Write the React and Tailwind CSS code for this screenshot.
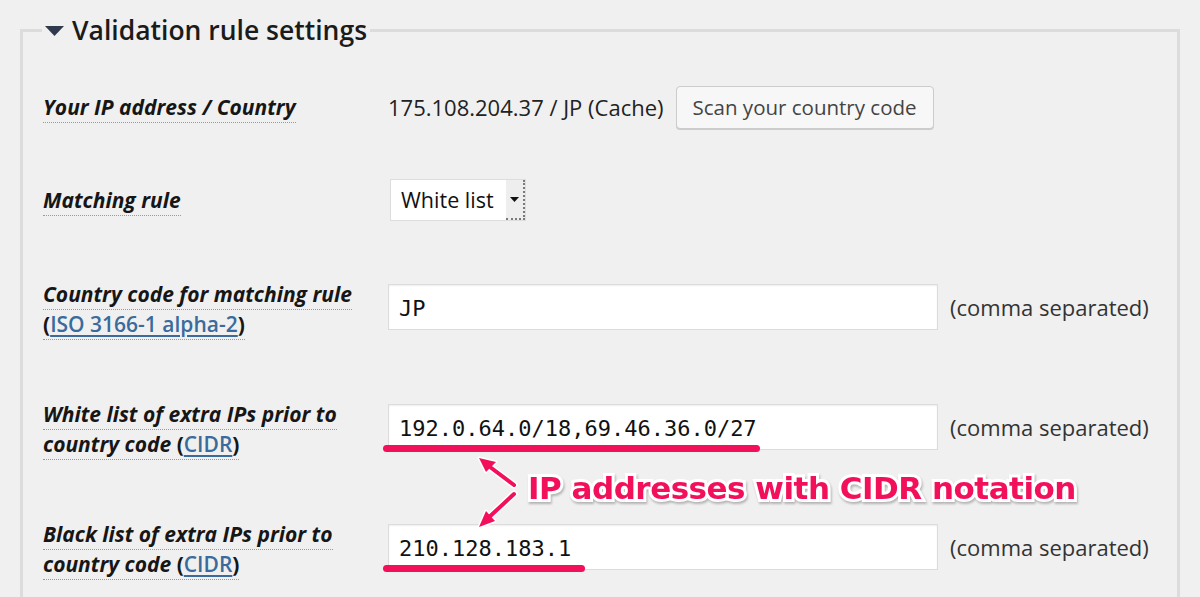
import React from 'react';

const label = 'border-b border-dotted border-[#9a9a9a] pb-[1px]';

function Label({ children }) {
  return (
    <div className="w-[345px] shrink-0 pr-[10px] text-[21px] leading-[30px] font-bold italic text-[#161616]">
      <span className={label} style={{ boxDecorationBreak: 'clone' }}>{children}</span>
    </div>
  );
}

function Link({ children }) {
  return <span className="text-[#3a6b9c] not-italic font-semibold underline underline-offset-[3px] decoration-[#3a6b9c]">{children}</span>;
}

function TextInput({ value, mark }) {
  return (
    <div className="relative w-[550px] h-[46px] bg-white border border-[#dcdcdc] shadow-[inset_0_1px_2px_rgba(0,0,0,0.07)] flex items-center pl-[10px] pt-[3px] font-['DejaVu_Sans_Mono',monospace] text-[22px] text-[#111]">
      {value}
      {mark && (
        <div className={`absolute left-[-6px] top-[40px] h-[7px] rounded-full bg-[#f2105a] ${mark}`} />
      )}
    </div>
  );
}

function Note() {
  return <span className="ml-[12px] text-[22px] text-[#333]">(comma separated)</span>;
}

export default function App() {
  return (
    <div className="relative h-[597px] overflow-hidden bg-[#f0f0f0] font-['Open_Sans',sans-serif] text-[#222]">
      <fieldset className="mx-[20px] mt-[14px] h-[700px] border-[3px] border-[#dcdcdc] px-[19px]">
        <legend className="px-[3px] flex items-center gap-[8px] text-[26.5px] leading-[32px] font-semibold text-[#1b1b1b]">
          <svg width="19" height="10" viewBox="0 0 19 10" className="mt-[2px]">
            <path d="M0 0 H19 L9.5 10 Z" fill="#2f3b4c" />
          </svg>
          Validation rule settings
        </legend>

        <div className="pl-[1px] pt-[38px]">
          <div className="flex items-center h-[46px]">
            <Label>Your IP address / Country</Label>
            <span className="text-[22px] text-[#222]">175.108.204.37 / JP (Cache)</span>
            <button className="ml-[12px] h-[43px] px-[16px] rounded-[4px] border border-[#cccccc] bg-[#f7f7f7] shadow-[0_1px_0_#cccccc] text-[20.5px] text-[#444]">
              Scan your country code
            </button>
          </div>

          <div className="flex items-center h-[42px] mt-[49px]">
            <Label>Matching rule</Label>
            <div className="ml-[2px] flex h-[42px] border border-[#dddddd] bg-white">
              <span className="pl-[10px] pr-[12px] text-[21.5px] leading-[40px] text-[#111]">White list</span>
              <div className="w-[19px] flex items-center justify-center bg-[#eeeeee] border-r-2 border-b-2 border-[#7a7a7a] border-dotted">
                <svg width="9" height="5" viewBox="0 0 9 5"><path d="M0 0 H9 L4.5 5 Z" fill="#111" /></svg>
              </div>
            </div>
          </div>

          <div className="flex items-start mt-[58px]">
            <Label>Country code for matching rule<br /><span className="not-italic">(</span><Link>ISO 3166-1 alpha-2</Link><span className="not-italic">)</span></Label>
            <div className="mt-[5px] flex items-center">
              <TextInput value="JP" />
              <Note />
            </div>
          </div>

          <div className="flex items-start mt-[60px]">
            <Label>White list of extra IPs prior to country code <span className="not-italic">(</span><Link>CIDR</Link><span className="not-italic">)</span></Label>
            <div className="mt-[5px] flex items-center">
              <TextInput value="192.0.64.0/18,69.46.36.0/27" mark="w-[377px]" />
              <Note />
            </div>
          </div>

          <div className="flex items-start mt-[60px]">
            <Label>Black list of extra IPs prior to country code <span className="not-italic">(</span><Link>CIDR</Link><span className="not-italic">)</span></Label>
            <div className="mt-[5px] flex items-center">
              <TextInput value="210.128.183.1" mark="w-[202px]" />
              <Note />
            </div>
          </div>
        </div>
      </fieldset>

      <svg className="absolute left-[466px] top-[450px]" width="60" height="90" viewBox="0 0 60 90">
        <g stroke="#ffffff" strokeWidth="7" strokeLinecap="round" fill="none">
          <path d="M48 35 L20 14" />
          <path d="M48 44 L20 70" />
        </g>
        <g fill="#ffffff" stroke="#ffffff" strokeWidth="3" strokeLinejoin="round">
          <path d="M13 8 L30 12 L20 22 Z" />
          <path d="M13 77 L20 61 L29 71 Z" />
        </g>
        <g stroke="#f2105a" strokeWidth="4" strokeLinecap="round" fill="none">
          <path d="M48 35 L20 14" />
          <path d="M48 44 L20 70" />
        </g>
        <g fill="#f2105a">
          <path d="M13 8 L30 12 L20 22 Z" />
          <path d="M13 77 L20 61 L29 71 Z" />
        </g>
      </svg>

      <div
        className="absolute left-[528px] top-[468px] text-[31px] leading-[40px] font-bold text-[#f2105a] font-['DejaVu_Sans',sans-serif] tracking-[-0.5px] drop-shadow-[1px_2px_1px_rgba(0,0,0,0.25)]"
        style={{ WebkitTextStroke: '6px #ffffff', paintOrder: 'stroke fill' }}
      >
        IP addresses with CIDR notation
      </div>
    </div>
  );
}
